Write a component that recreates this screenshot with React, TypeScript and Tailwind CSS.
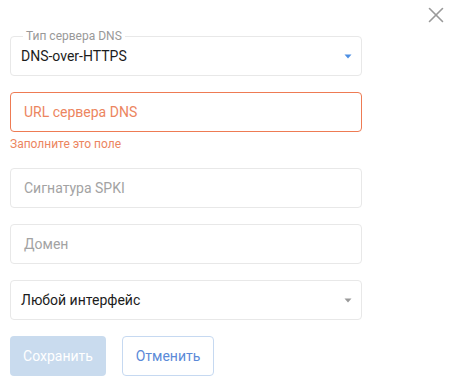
import { X } from "lucide-react"

function Arrow({ color }: { color: string }) {
	return (
		<svg width="8" height="5" viewBox="0 0 8 5" className="ml-auto shrink-0">
			<path d="M0.5 0.5h7L4 4.5z" fill={color} />
		</svg>
	)
}

function TextField({ placeholder, error }: { placeholder: string; error?: boolean }) {
	return (
		<div
			className={
				"h-[40px] rounded-[4px] border flex items-center px-[13px] text-[14px] " +
				(error ? "border-[#ee7b53] text-[#ec8560]" : "border-[#e8e8e8] text-[#a3a3a3]")
			}
		>
			{placeholder}
		</div>
	)
}

export default function App() {
	return (
		<div className="w-[450px] h-[384px] bg-white relative font-[Roboto,'Liberation_Sans',sans-serif]">
			<button className="absolute right-[1px] top-[2px] text-[#9a9a9a]">
				<X size={26} strokeWidth={1.5} />
			</button>

			<div className="w-[352px] ml-[10px] pt-[36px] flex flex-col">
				<div className="relative h-[40px] rounded-[4px] border border-[#e8e8e8] flex items-center pl-[10px] pr-[9px] text-[14px] text-[#1c1c1c]">
					<span className="absolute left-[12px] top-[-8px] bg-white px-[3px] text-[12px] leading-[14px] text-[#999]">
						Тип сервера DNS
					</span>
					<span className="pt-[1px]">DNS-over-HTTPS</span>
					<Arrow color="#4d8fe3" />
				</div>

				<div className="mt-[16px]">
					<TextField placeholder="URL сервера DNS" error />
				</div>
				<div className="mt-[5px] text-[12px] leading-[14px] text-[#ec8560]">
					Заполните это поле
				</div>

				<div className="mt-[17px]">
					<TextField placeholder="Сигнатура SPKI" />
				</div>
				<div className="mt-[16px]">
					<TextField placeholder="Домен" />
				</div>

				<div className="mt-[16px] h-[40px] rounded-[4px] border border-[#e8e8e8] flex items-center pl-[10px] pr-[9px] text-[14px] text-[#1c1c1c]">
					<span>Любой интерфейс</span>
					<Arrow color="#9a9a9a" />
				</div>

				<div className="mt-[16px] flex gap-[16px]">
					<button className="h-[40px] w-[96px] rounded-[4px] bg-[#c9dbee] text-white text-[14px]">
						Сохранить
					</button>
					<button className="h-[40px] w-[92px] rounded-[4px] border border-[#c6d9f1] text-[#5b8ad8] text-[14px]">
						Отменить
					</button>
				</div>
			</div>
		</div>
	)
}
